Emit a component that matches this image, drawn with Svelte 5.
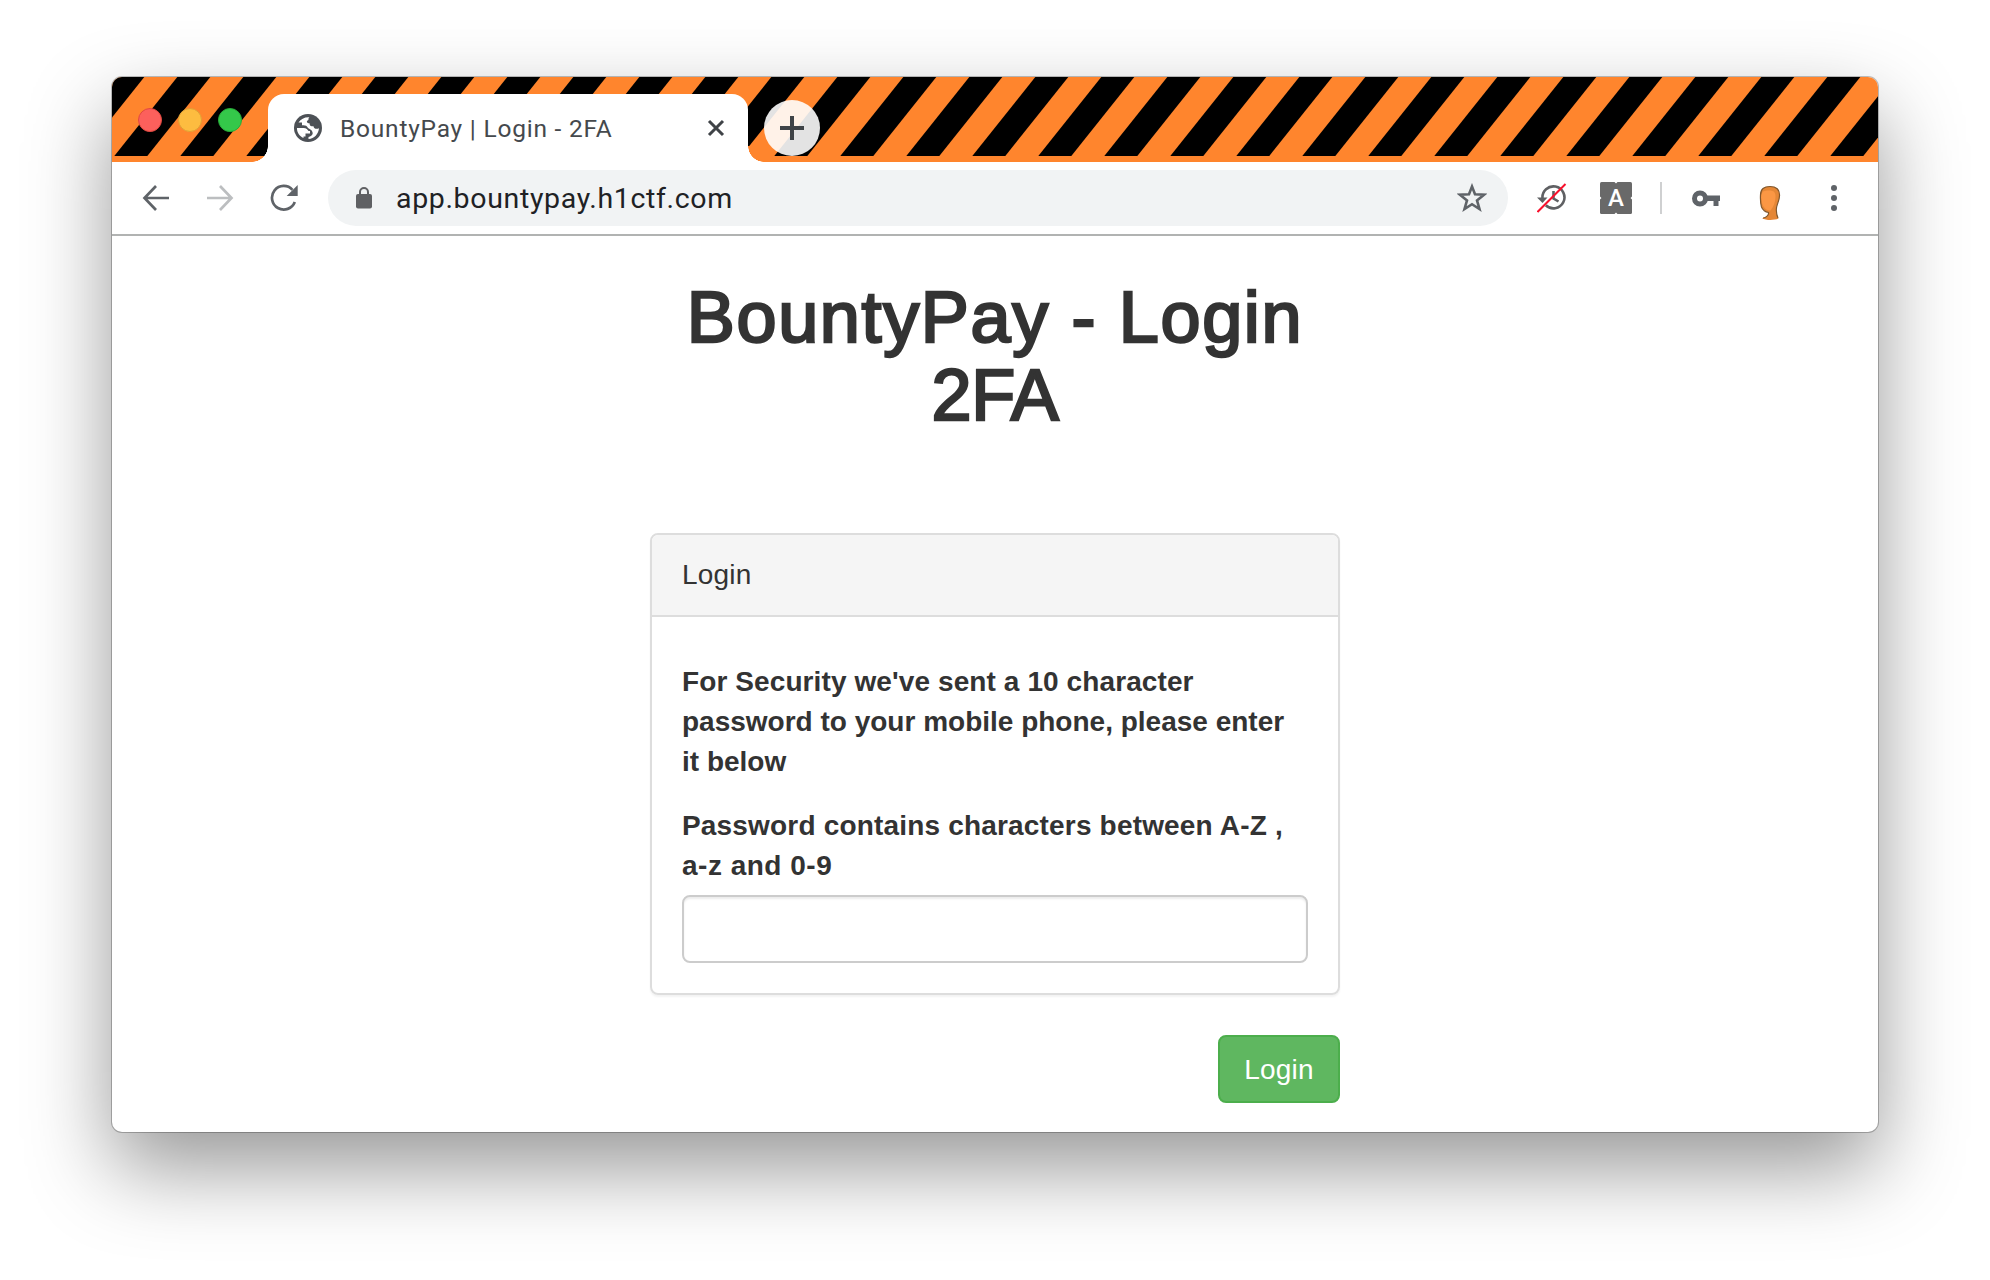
<script>
  const stripes = Array.from({ length: 29 }, (_, k) => 2.3 + 66 * (k - 1));
</script>

<main>
  <section class="window">
    <header class="strip">
      <svg class="stripes" viewBox="0 0 1766 85" width="1766" height="85">
        {#each stripes as x}
          <polygon points="{x},79 {x + 33},79 {x + 96},0 {x + 63},0" />
        {/each}
      </svg>
      <div class="lights"><i class="red"></i><i class="amber"></i><i class="green"></i></div>
      <div class="tab">
        <svg class="globe" width="28" height="28" viewBox="0 0 28 28">
          <circle cx="14" cy="14" r="14" fill="#4d5156" />
          <path d="M3 14H9.500C12.500 14 13.500 15.500 14.500 17H16V19.500H11.500V22.500H9.500V24C5.500 22 2.800 18.500 3 14Z M15.500 3.200C13.500 4.500 15.500 5.500 13.500 6.500C12 7.500 13.500 9.500 15.500 9.300C16 11 15.500 12 17.500 12.200H19.500C20 15 22.500 15.300 25 14.200C24.500 20 20.300 24.500 14.500 25V23C16.500 22.500 18.500 21.500 18.700 19.500C18.700 16 16 15.500 14 14C13 12 11.500 11.300 9.500 11.300H8V8.500H4.500C7 5 10.500 2.900 15.500 3.200Z" fill="#fff" />
        </svg>
        <span class="tab-title">BountyPay | Login - 2FA</span>
        <svg class="close" width="18" height="18" viewBox="0 0 18 18"><path d="M2 2L16 16M16 2L2 16" /></svg>
      </div>
      <button class="new-tab" aria-label="New tab">
        <svg width="24" height="24" viewBox="0 0 24 24"><path d="M12 0V24M0 12H24" /></svg>
      </button>
    </header>

    <nav class="toolbar">
      <svg class="back" width="28" height="28" viewBox="0 0 28 28"><path d="M27 14H3M14 2L2.500 14L14 26" /></svg>
      <svg class="forward" width="28" height="28" viewBox="0 0 28 28"><path d="M1 14H25M14 2L25.500 14L14 26" /></svg>
      <svg class="reload" width="28" height="28" viewBox="0 0 28 28">
        <path d="M24.800 18A11.800 11.800 0 1 1 22.500 5.800" /><path class="head" d="M27.700 1V12H16.700Z" />
      </svg>
      <div class="address">
        <svg class="lock" width="16" height="22" viewBox="0 0 16 22">
          <rect y="7" width="16" height="14.500" rx="2" fill="#5f6063" />
          <path d="M4 8V5a4 4 0 0 1 8 0V8" fill="none" stroke="#5f6063" stroke-width="2" />
        </svg>
        <span class="url">app.bountypay.h1ctf.com</span>
        <svg class="star" width="30" height="30" viewBox="0 0 30 30"><path d="M15 3.500L18 11.200L27 11.700L20 17.400L22.500 26L15 21.200L7.500 26L10 17.400L3 11.700L12 11.200Z" /></svg>
      </div>
      <svg class="history" width="30" height="30" viewBox="0 0 30 30">
        <path d="M5.500 15.500A11 11 0 1 1 8.800 22.300M16.500 8V15.500L21.500 18.500" fill="none" stroke="#5f6063" stroke-width="2.600" />
        <path d="M0 14.500H10.500L5.500 20Z" fill="#5f6063" />
        <path d="M.5 29L28.500 1" stroke="#f8102c" stroke-width="2" />
      </svg>
      <svg class="badge" width="32" height="32" viewBox="0 0 32 32">
        <rect width="32" height="32" rx="1.500" fill="#696969" />
        <path d="M14.500 0H17.500L16 1.500ZM14.500 32H17.500L16 30.500ZM0 14.500V17.500L1.500 16ZM32 14.500V17.500L30.500 16Z" fill="#fff" />
        <text x="16" y="24.300" text-anchor="middle">A</text>
      </svg>
      <i class="divider"></i>
      <svg class="key" width="28" height="17" viewBox="0 0 28 17">
        <circle cx="8" cy="8.500" r="5.500" fill="none" stroke="#5f6368" stroke-width="5" />
        <path d="M14 5.500H28V11H26.500V16H21.500V11H14Z" fill="#5f6368" />
      </svg>
      <svg class="avatar" width="24" height="36" viewBox="0 0 24 36">
        <path d="M2.500 10C2.500 4 6 1.500 12 1.500C18 1.500 22 4.500 21.500 11C21.300 17 18.300 19 18.300 25C18.400 29 19 31 20.500 33.500C16 35.500 8 35.500 4 33.200C8 33 11 31 10.500 27.500C8.500 27 5 25.500 3.500 22C2.300 18 2.300 14 2.500 10Z" fill="#e58736" />
        <path d="M3.200 11C3.500 6.500 6 5.500 11 5.500C16 5.500 17.500 7.500 17.500 12C17.500 17 15.500 22 12.500 25.500C7 26 3 20 3.200 11Z" fill="#fb9744" />
        <path d="M2.500 10C2.500 4 6 1.500 12 1.500C18 1.500 22 4.500 21.500 11C21.300 17 18.300 19 18.300 25C18.400 29 19 31 20 33M2.500 10C2.300 14 2.300 18 3.500 22C5 25.500 7.500 27 10.500 27.500C11 30 8 33 5 33" fill="none" stroke="#80572d" stroke-width="1.200" />
      </svg>
      <svg class="menu" width="6" height="28" viewBox="0 0 6 28"><circle cx="3" cy="4" r="3" /><circle cx="3" cy="14" r="3" /><circle cx="3" cy="24" r="3" /></svg>
    </nav>

    <div class="page">
      <h1>BountyPay - Login<br /><span class="factor">2FA</span></h1>
      <form>
        <div class="panel">
          <div class="panel-heading">Login</div>
          <div class="panel-body">
            <p><span class="lead">For Security we've sent a 10 character</span><br />password to your mobile phone, please enter<br />it below</p>
            <label for="code">Password contains characters between A-Z ,<br /><span class="range">a-z and 0-9</span></label>
            <input id="code" type="text" />
          </div>
        </div>
        <button class="submit" type="button">Login</button>
      </form>
    </div>
  </section>
</main>

<style>
  :global(body) { margin: 0; background: #fff; }
  main { box-sizing: border-box; width: 1990px; height: 1280px; padding: 77px 112px 0; overflow: hidden; background: #fff; }
  .window {
    width: 1766px; height: 1055px; border-radius: 10px; overflow: hidden; background: #fff;
    box-shadow: 0 0 0 1px rgba(0,0,0,.24), 0 36px 84px rgba(0,0,0,.41);
    font-family: "Liberation Sans", Arial, sans-serif;
  }
  .strip { position: relative; height: 85px; background: #ff852d; display: flex; align-items: flex-start; overflow: hidden; }
  .stripes { position: absolute; inset: 0; }
  .lights { position: relative; display: flex; gap: 16px; padding: 31px 0 0 26px; width: 130px; box-sizing: border-box; margin-right: 26px; }
  .lights i { flex: none; width: 24px; height: 24px; border-radius: 50%; box-sizing: border-box; }
  .red { background: #fc605c; border: 1px solid #e2483f; }
  .amber { background: #fdbc40; border: 1px solid #e0a035; }
  .green { background: #34c84a; border: 1px solid #27ab38; }
  .tab { position: relative; box-sizing: border-box; width: 480px; height: 68px; margin-top: 17px; padding: 0 23px 0 26px; border-radius: 16px 16px 0 0; background: #fff; display: flex; align-items: center; }
  .tab::before, .tab::after { content: ""; position: absolute; bottom: 0; width: 16px; height: 16px; }
  .tab::before { left: -16px; background: radial-gradient(circle at 0 0, transparent 15.500px, #fff 16px); }
  .tab::after { right: -16px; background: radial-gradient(circle at 100% 0, #ff852d 15.500px, #fff 16px); }
  .tab-title { margin-left: 18px; font: 24.500px Roboto, sans-serif; letter-spacing: .78px; color: #45494d; flex: 1; white-space: nowrap; }
  .close path, .new-tab path { fill: none; stroke: #3f4347; stroke-width: 3; }
  .new-tab { position: relative; width: 56px; height: 56px; margin: 23px 0 0 16px; padding: 0; border: 0; border-radius: 50%; background: rgba(255,255,255,.89); display: grid; place-items: center; }
  .new-tab path { stroke-width: 4; }
  .toolbar { box-sizing: border-box; height: 74px; padding: 0 41px 0 30px; border-bottom: 2px solid #b1b3b2; display: flex; align-items: center; }
  .back, .forward, .reload { fill: none; stroke: #5f6368; stroke-width: 2.700; }
  .forward { margin-left: 36px; stroke: #bcbec0; }
  .reload { margin-left: 36px; }
  .reload .head { fill: #5f6368; stroke: none; }
  .address { box-sizing: border-box; width: 1180px; height: 56px; margin-left: 30px; padding: 0 21px 0 28px; border-radius: 28px; background: #f1f3f4; display: flex; align-items: center; }
  .url { flex: 1; margin-left: 24px; font: 28.500px Roboto, sans-serif; letter-spacing: .65px; color: #202124; }
  .star path { fill: none; stroke: #5f6368; stroke-width: 2.600; }
  .history { margin-left: 29px; }
  .badge { margin-left: 33px; }
  .badge text { fill: #fff; font: 500 24px Roboto, sans-serif; }
  .divider { width: 2px; height: 32px; margin-left: 28px; background: #cfd0d1; }
  .key { margin-left: 30px; }
  .avatar { margin: 9px 0 0 38px; }
  .menu { margin-left: 49px; fill: #5f6368; }
  .page { height: 896px; box-sizing: border-box; padding-top: 42px; display: flex; flex-direction: column; align-items: center; color: #333; }
  h1 { margin: 0; width: 690px; font-size: 72px; line-height: 78px; font-weight: 400; letter-spacing: 1.650px; -webkit-text-stroke: 2.500px #333; text-align: center; }
  .factor { letter-spacing: -.3px; }
  form { width: 690px; margin-top: 99px; display: flex; flex-direction: column; }
  .panel { box-sizing: border-box; width: 690px; height: 462px; border: 2px solid #ddd; border-radius: 8px; box-shadow: 0 2px 2px rgba(0,0,0,.05); overflow: hidden; font-size: 28px; line-height: 40px; }
  .panel-heading { padding: 20px 30px; background: #f5f5f5; border-bottom: 2px solid #ddd; letter-spacing: .2px; }
  .panel-body { padding: 45px 30px 0; font-weight: 700; display: flex; flex-direction: column; white-space: nowrap; }
  p { margin: 0 0 24px; }
  .lead { letter-spacing: .1px; }
  label { letter-spacing: .18px; }
  .range { letter-spacing: .5px; }
  input { box-sizing: border-box; width: 626px; height: 68px; margin-top: 9px; border: 2px solid #ccc; border-radius: 8px; background: #fff; box-shadow: inset 0 2px 2px rgba(0,0,0,.075); font-size: 28px; padding: 0 24px; }
  .submit { align-self: flex-end; box-sizing: border-box; width: 122px; height: 68px; margin-top: 40px; padding: 2px 0 0; border: 2px solid #4cae4c; border-radius: 8px; background: #5fb760; color: #fff; font: 28px "Liberation Sans", Arial, sans-serif; letter-spacing: .2px; }
</style>
